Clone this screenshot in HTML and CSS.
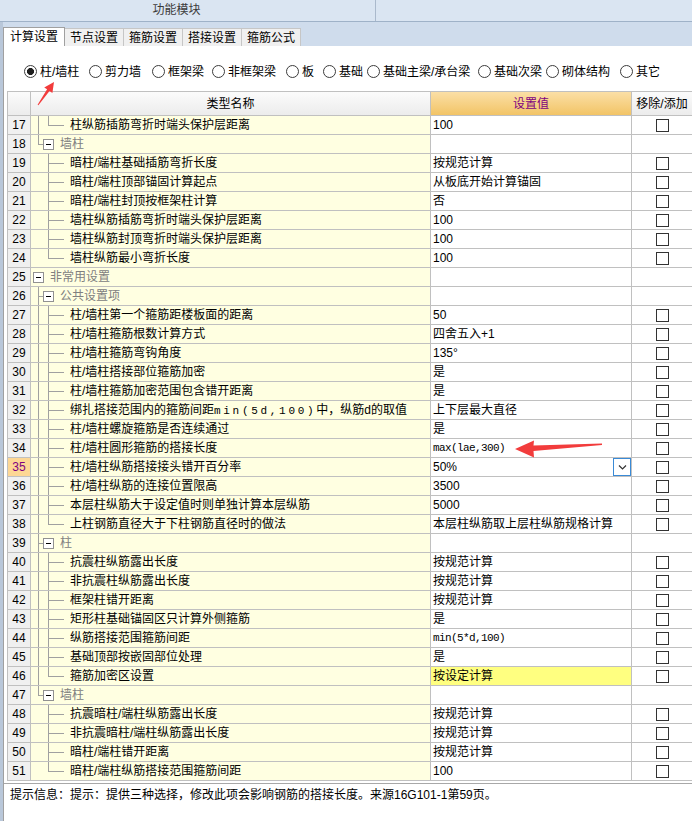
FILE: index.html
```html
<!DOCTYPE html>
<html lang="zh">
<head>
<meta charset="utf-8">
<title>计算设置</title>
<link rel="stylesheet" href="styles.css">
</head>
<body>
<div class="topbar"><div class="title">功能模块</div></div>
<div class="main">
  <div class="strip"></div>
  <div class="panel">
    <div class="tabs">
      <div class="tab active">计算设置</div>
      <div class="tab">节点设置</div>
      <div class="tab">箍筋设置</div>
      <div class="tab">搭接设置</div>
      <div class="tab">箍筋公式</div>
    </div>
    <div class="content">
      <div class="radios">
        <div class="opt"><span class="rd on"></span><span>柱/墙柱</span></div>
        <div class="opt"><span class="rd"></span><span>剪力墙</span></div>
        <div class="opt"><span class="rd"></span><span>框架梁</span></div>
        <div class="opt"><span class="rd"></span><span>非框架梁</span></div>
        <div class="opt"><span class="rd"></span><span>板</span></div>
        <div class="opt"><span class="rd"></span><span>基础</span></div>
        <div class="opt"><span class="rd"></span><span>基础主梁/承台梁</span></div>
        <div class="opt"><span class="rd"></span><span>基础次梁</span></div>
        <div class="opt"><span class="rd"></span><span>砌体结构</span></div>
        <div class="opt"><span class="rd"></span><span>其它</span></div>
      </div>
      <div class="grid">
        <div class="hd"><div class="c"></div><div class="c">类型名称</div><div class="c sv">设置值</div><div class="c last">移除/添加</div></div>

        <div class="row"><div class="num">17</div><div class="name"><span class="g v"></span><span class="g l"></span><span class="h"></span><span>柱纵筋插筋弯折时端头保护层距离</span></div><div class="val">100</div><div class="chk"><span class="cb"></span></div></div>
        <div class="row grp"><div class="num">18</div><div class="name"><span class="g l"></span><span class="box"></span><span>墙柱</span></div><div class="val"></div><div class="chk"></div></div>
        <div class="row"><div class="num">19</div><div class="name"><span class="g"></span><span class="g t"></span><span class="h"></span><span>暗柱/端柱基础插筋弯折长度</span></div><div class="val">按规范计算</div><div class="chk"><span class="cb"></span></div></div>
        <div class="row"><div class="num">20</div><div class="name"><span class="g"></span><span class="g t"></span><span class="h"></span><span>暗柱/端柱顶部锚固计算起点</span></div><div class="val">从板底开始计算锚固</div><div class="chk"><span class="cb"></span></div></div>
        <div class="row"><div class="num">21</div><div class="name"><span class="g"></span><span class="g t"></span><span class="h"></span><span>暗柱/端柱封顶按框架柱计算</span></div><div class="val">否</div><div class="chk"><span class="cb"></span></div></div>
        <div class="row"><div class="num">22</div><div class="name"><span class="g"></span><span class="g t"></span><span class="h"></span><span>墙柱纵筋插筋弯折时端头保护层距离</span></div><div class="val">100</div><div class="chk"><span class="cb"></span></div></div>
        <div class="row"><div class="num">23</div><div class="name"><span class="g"></span><span class="g t"></span><span class="h"></span><span>墙柱纵筋封顶弯折时端头保护层距离</span></div><div class="val">100</div><div class="chk"><span class="cb"></span></div></div>
        <div class="row"><div class="num">24</div><div class="name"><span class="g"></span><span class="g l"></span><span class="h"></span><span>墙柱纵筋最小弯折长度</span></div><div class="val">100</div><div class="chk"><span class="cb"></span></div></div>
        <div class="row grp"><div class="num">25</div><div class="name"><span class="box"></span><span>非常用设置</span></div><div class="val"></div><div class="chk"></div></div>
        <div class="row grp"><div class="num">26</div><div class="name"><span class="g t"></span><span class="box"></span><span>公共设置项</span></div><div class="val"></div><div class="chk"></div></div>
        <div class="row"><div class="num">27</div><div class="name"><span class="g v"></span><span class="g t"></span><span class="h"></span><span>柱/墙柱第一个箍筋距楼板面的距离</span></div><div class="val">50</div><div class="chk"><span class="cb"></span></div></div>
        <div class="row"><div class="num">28</div><div class="name"><span class="g v"></span><span class="g t"></span><span class="h"></span><span>柱/墙柱箍筋根数计算方式</span></div><div class="val">四舍五入+1</div><div class="chk"><span class="cb"></span></div></div>
        <div class="row"><div class="num">29</div><div class="name"><span class="g v"></span><span class="g t"></span><span class="h"></span><span>柱/墙柱箍筋弯钩角度</span></div><div class="val">135°</div><div class="chk"><span class="cb"></span></div></div>
        <div class="row"><div class="num">30</div><div class="name"><span class="g v"></span><span class="g t"></span><span class="h"></span><span>柱/墙柱搭接部位箍筋加密</span></div><div class="val">是</div><div class="chk"><span class="cb"></span></div></div>
        <div class="row"><div class="num">31</div><div class="name"><span class="g v"></span><span class="g t"></span><span class="h"></span><span>柱/墙柱箍筋加密范围包含错开距离</span></div><div class="val">是</div><div class="chk"><span class="cb"></span></div></div>
        <div class="row"><div class="num">32</div><div class="name"><span class="g v"></span><span class="g t"></span><span class="h"></span><span>绑扎搭接范围内的箍筋间距<span class="wide">min(5d,100)</span>中，纵筋d的取值</span></div><div class="val">上下层最大直径</div><div class="chk"><span class="cb"></span></div></div>
        <div class="row"><div class="num">33</div><div class="name"><span class="g v"></span><span class="g t"></span><span class="h"></span><span>柱/墙柱螺旋箍筋是否连续通过</span></div><div class="val">是</div><div class="chk"><span class="cb"></span></div></div>
        <div class="row"><div class="num">34</div><div class="name"><span class="g v"></span><span class="g t"></span><span class="h"></span><span>柱/墙柱圆形箍筋的搭接长度</span></div><div class="val mono">max(lae,300)</div><div class="chk"><span class="cb"></span></div></div>
        <div class="row"><div class="num sel">35</div><div class="name"><span class="g v"></span><span class="g t"></span><span class="h"></span><span>柱/墙柱纵筋搭接接头错开百分率</span></div><div class="val combo"><span class="vt">50%</span><span class="dd"><svg width="9" height="6" viewBox="0 0 9 6"><path d="M1 1.5 L4.5 5 L8 1.5" fill="none" stroke="#333" stroke-width="1.2"/></svg></span></div><div class="chk"><span class="cb"></span></div></div>
        <div class="row"><div class="num">36</div><div class="name"><span class="g v"></span><span class="g t"></span><span class="h"></span><span>柱/墙柱纵筋的连接位置限高</span></div><div class="val">3500</div><div class="chk"><span class="cb"></span></div></div>
        <div class="row"><div class="num">37</div><div class="name"><span class="g v"></span><span class="g t"></span><span class="h"></span><span>本层柱纵筋大于设定值时则单独计算本层纵筋</span></div><div class="val">5000</div><div class="chk"><span class="cb"></span></div></div>
        <div class="row"><div class="num">38</div><div class="name"><span class="g v"></span><span class="g l"></span><span class="h"></span><span>上柱钢筋直径大于下柱钢筋直径时的做法</span></div><div class="val">本层柱纵筋取上层柱纵筋规格计算</div><div class="chk"><span class="cb"></span></div></div>
        <div class="row grp"><div class="num">39</div><div class="name"><span class="g t"></span><span class="box"></span><span>柱</span></div><div class="val"></div><div class="chk"></div></div>
        <div class="row"><div class="num">40</div><div class="name"><span class="g v"></span><span class="g t"></span><span class="h"></span><span>抗震柱纵筋露出长度</span></div><div class="val">按规范计算</div><div class="chk"><span class="cb"></span></div></div>
        <div class="row"><div class="num">41</div><div class="name"><span class="g v"></span><span class="g t"></span><span class="h"></span><span>非抗震柱纵筋露出长度</span></div><div class="val">按规范计算</div><div class="chk"><span class="cb"></span></div></div>
        <div class="row"><div class="num">42</div><div class="name"><span class="g v"></span><span class="g t"></span><span class="h"></span><span>框架柱错开距离</span></div><div class="val">按规范计算</div><div class="chk"><span class="cb"></span></div></div>
        <div class="row"><div class="num">43</div><div class="name"><span class="g v"></span><span class="g t"></span><span class="h"></span><span>矩形柱基础锚固区只计算外侧箍筋</span></div><div class="val">是</div><div class="chk"><span class="cb"></span></div></div>
        <div class="row"><div class="num">44</div><div class="name"><span class="g v"></span><span class="g t"></span><span class="h"></span><span>纵筋搭接范围箍筋间距</span></div><div class="val mono">min(5*d,100)</div><div class="chk"><span class="cb"></span></div></div>
        <div class="row"><div class="num">45</div><div class="name"><span class="g v"></span><span class="g t"></span><span class="h"></span><span>基础顶部按嵌固部位处理</span></div><div class="val">是</div><div class="chk"><span class="cb"></span></div></div>
        <div class="row"><div class="num">46</div><div class="name"><span class="g v"></span><span class="g l"></span><span class="h"></span><span>箍筋加密区设置</span></div><div class="val hl">按设定计算</div><div class="chk"><span class="cb"></span></div></div>
        <div class="row grp"><div class="num">47</div><div class="name"><span class="g l"></span><span class="box"></span><span>墙柱</span></div><div class="val"></div><div class="chk"></div></div>
        <div class="row"><div class="num">48</div><div class="name"><span class="g"></span><span class="g t"></span><span class="h"></span><span>抗震暗柱/端柱纵筋露出长度</span></div><div class="val">按规范计算</div><div class="chk"><span class="cb"></span></div></div>
        <div class="row"><div class="num">49</div><div class="name"><span class="g"></span><span class="g t"></span><span class="h"></span><span>非抗震暗柱/端柱纵筋露出长度</span></div><div class="val">按规范计算</div><div class="chk"><span class="cb"></span></div></div>
        <div class="row"><div class="num">50</div><div class="name"><span class="g"></span><span class="g t"></span><span class="h"></span><span>暗柱/端柱错开距离</span></div><div class="val">按规范计算</div><div class="chk"><span class="cb"></span></div></div>
        <div class="row"><div class="num">51</div><div class="name"><span class="g"></span><span class="g l"></span><span class="h"></span><span>暗柱/端柱纵筋搭接范围箍筋间距</span></div><div class="val">100</div><div class="chk"><span class="cb"></span></div></div>
      </div>
      <div class="status">提示信息：提示：提供三种选择，修改此项会影响钢筋的搭接长度。来源16G101-1第59页。</div>
    </div>
  </div>
</div>
<svg class="marks" width="692" height="821" viewBox="0 0 692 821">
  <polygon fill="#f23c3c" points="54,82 52.4,93 49.5,91.1 38.4,105.3 37.6,104.7 47.1,89.3 44.2,87.4"/>
  <polygon fill="#f23c3c" points="515,449 534,440.5 533.5,445.5 602,443.6 602,445 533.5,451 534,457.5"/>
</svg>
</body>
</html>
```
FILE: styles.css
```css
* { box-sizing: border-box; }
html, body { margin: 0; padding: 0; }
body {
  width: 692px;
  height: 821px;
  overflow: hidden;
  background: #fff;
  color: #000;
  font: 12px/1 "Liberation Sans", "Noto Sans CJK SC", sans-serif;
  position: relative;
}
.topbar {
  height: 22px;
  background: #dae5f2;
  border-bottom: 1px solid #9fb2c8;
  display: flex;
}
.title {
  width: 376px;
  padding-right: 22px;
  border-right: 1px solid #aab9cc;
  text-align: center;
  line-height: 21px;
  color: #3a3a3a;
}
.main {
  display: flex;
  height: 799px;
}
.strip {
  width: 3px;
  flex: none;
  background: #b9c7d9;
}
.panel {
  flex: 1;
  display: flex;
  flex-direction: column;
  min-width: 0;
}
.tabs {
  height: 24px;
  background: #cfdcec;
  display: flex;
  align-items: flex-end;
}
.tab {
  height: 18px;
  line-height: 18px;
  padding: 0 5px;
  background: #f0f0f0;
  border-top: 1px solid #c6c6c6;
  border-right: 1px solid #c6c6c6;
  color: #000;
  white-space: nowrap;
}
.tab.active {
  height: 19px;
  line-height: 19px;
  width: 62px;
  text-align: center;
  background: #fff;
  border-left: 1px solid #a0a0a0;
  border-top: 1px solid #a0a0a0;
  border-right: 1px solid #a0a0a0;
}
.content {
  flex: 1;
  background: #fff;
  border-left: 1px solid #a0a0a0;
  display: flex;
  flex-direction: column;
}
.radios {
  display: flex;
  align-items: center;
  height: 13px;
  margin: 19px 0 0 20px;
}
.opt {
  display: flex;
  align-items: center;
  gap: 3px;
  flex: none;
  white-space: nowrap;
}
.opt:nth-child(1) { width: 65px; }
.opt:nth-child(2) { width: 63px; }
.opt:nth-child(3) { width: 60px; }
.opt:nth-child(4) { width: 74px; }
.opt:nth-child(5) { width: 37px; }
.opt:nth-child(6) { width: 44px; }
.opt:nth-child(7) { width: 111px; }
.opt:nth-child(8) { width: 68px; }
.opt:nth-child(9) { width: 74px; }
.rd {
  width: 13px;
  height: 13px;
  flex: none;
  border: 1px solid #3c3c3c;
  border-radius: 50%;
  background: #fff;
}
.rd.on {
  background: radial-gradient(circle, #1e1e1e 0 3.2px, #fff 3.8px);
}
.grid {
  margin: 13px 0 0 3px;
  border-top: 1px solid #c0c0c0;
  border-left: 1px solid #c0c0c0;
}
.hd, .row {
  display: grid;
  grid-template-columns: 23px 400px 201px 1fr;
  border-bottom: 1px solid #c0c0c0;
}
.hd { height: 24px; }
.row { height: 19px; }
.hd .c {
  border-right: 1px solid #c0c0c0;
  background: linear-gradient(#fbfbfb, #ececec);
  display: flex;
  align-items: center;
  justify-content: center;
  white-space: nowrap;
  overflow: hidden;
}
.hd .c.sv {
  background: linear-gradient(#fbdfa6, #f2c466);
  color: #800080;
}
.hd .c.last { border-right: 0; }
.num {
  border-right: 1px solid #c0c0c0;
  background: #f0f0f0;
  display: flex;
  align-items: center;
  justify-content: center;
}
.num.sel {
  background: #fdd795;
  color: #800080;
}
.name {
  --ln: #a0a0a0;
  border-right: 1px solid #c0c0c0;
  background: #ffffe1;
  display: flex;
  align-items: center;
  padding-left: 2px;
  white-space: nowrap;
  overflow: hidden;
}
.grp .name { color: #808080; }
.g {
  width: 10px;
  flex: none;
  align-self: stretch;
}
.g.v {
  background: linear-gradient(var(--ln), var(--ln)) 5px 0 / 1px 100% no-repeat;
}
.g.t {
  background:
    linear-gradient(var(--ln), var(--ln)) 5px 0 / 1px 100% no-repeat,
    linear-gradient(var(--ln), var(--ln)) 5px 9px / 5px 1px no-repeat;
}
.g.l {
  background:
    linear-gradient(var(--ln), var(--ln)) 5px 0 / 1px 10px no-repeat,
    linear-gradient(var(--ln), var(--ln)) 5px 9px / 5px 1px no-repeat;
}
.h {
  width: 11px;
  flex: none;
  align-self: stretch;
  margin-right: 6px;
  background: linear-gradient(var(--ln), var(--ln)) 0 9px / 100% 1px no-repeat;
}
.box {
  width: 11px;
  height: 11px;
  flex: none;
  margin-right: 6px;
  border: 1px solid #919191;
  background: linear-gradient(#000, #000) 2px 4px / 5px 1px no-repeat, #fff;
}
.mono {
  font-family: "Liberation Mono", "Noto Sans CJK SC", monospace;
  font-size: 11px;
  letter-spacing: -0.6px;
}
.wide {
  font-family: "Liberation Mono", monospace;
  font-size: 11px;
  letter-spacing: 2.7px;
}
.val {
  border-right: 1px solid #c0c0c0;
  display: flex;
  align-items: center;
  padding-left: 2px;
  white-space: nowrap;
  overflow: hidden;
}
.val.hl { background: #ffff80; }
.val.combo { padding-right: 0; }
.vt { flex: 1; }
.dd {
  width: 18px;
  height: 18px;
  flex: none;
  border: 1px solid #3a8ad6;
  background: #fff;
  display: flex;
  align-items: center;
  justify-content: center;
}
.chk {
  display: flex;
  align-items: center;
  justify-content: center;
}
.cb {
  width: 13px;
  height: 13px;
  border: 1px solid #333;
  background: #fff;
}
.status {
  margin-top: 2px;
  border-top: 1px solid #a8a8a8;
  padding: 4px 0 0 6px;
  line-height: 14px;
  white-space: nowrap;
}
.marks {
  position: absolute;
  left: 0;
  top: 0;
  pointer-events: none;
}
```
